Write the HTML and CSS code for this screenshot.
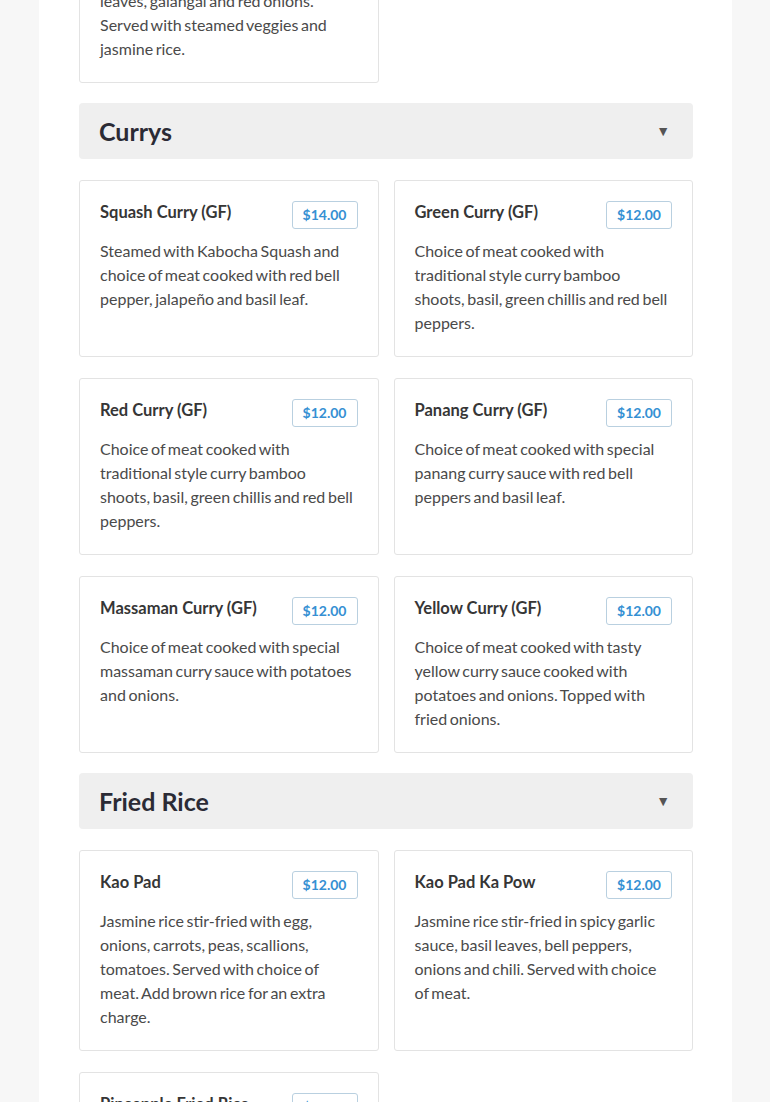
FILE: index.html
```html
<!DOCTYPE html>
<html lang="en">
<head>
<meta charset="utf-8">
<title>Menu</title>
<link rel="stylesheet" href="styles.css">
</head>
<body>
<main class="page">
  <section class="group group-prev">
    <div class="grid">
      <article class="card">
        <div class="card-head"><h3 class="dish">Pad Prik Khing</h3><span class="price">$12.00</span></div>
        <p class="desc">Choice of meat stir-fried with chili paste, lemongrass and kaffir lime<br>leaves, galangal and red onions. Served with steamed veggies and jasmine rice.</p>
      </article>
    </div>
  </section>

  <section class="group">
    <div class="section-head"><h2 class="section-title">Currys</h2><span class="caret">▼</span></div>
    <div class="grid">
      <article class="card">
        <div class="card-head"><h3 class="dish">Squash Curry (GF)</h3><span class="price">$14.00</span></div>
        <p class="desc">Steamed with Kabocha Squash and choice of meat cooked with red bell pepper, jalapeño and basil leaf.</p>
      </article>
      <article class="card">
        <div class="card-head"><h3 class="dish">Green Curry (GF)</h3><span class="price">$12.00</span></div>
        <p class="desc">Choice of meat cooked with traditional style curry bamboo shoots, basil, green chillis and red bell peppers.</p>
      </article>
      <article class="card">
        <div class="card-head"><h3 class="dish">Red Curry (GF)</h3><span class="price">$12.00</span></div>
        <p class="desc">Choice of meat cooked with traditional style curry bamboo shoots, basil, green chillis and red bell peppers.</p>
      </article>
      <article class="card">
        <div class="card-head"><h3 class="dish">Panang Curry (GF)</h3><span class="price">$12.00</span></div>
        <p class="desc">Choice of meat cooked with special panang curry sauce with red bell peppers and basil leaf.</p>
      </article>
      <article class="card">
        <div class="card-head"><h3 class="dish">Massaman Curry (GF)</h3><span class="price">$12.00</span></div>
        <p class="desc">Choice of meat cooked with special massaman curry sauce with potatoes and onions.</p>
      </article>
      <article class="card">
        <div class="card-head"><h3 class="dish">Yellow Curry (GF)</h3><span class="price">$12.00</span></div>
        <p class="desc">Choice of meat cooked with tasty yellow curry sauce cooked with potatoes and onions. Topped with fried onions.</p>
      </article>
    </div>
  </section>

  <section class="group">
    <div class="section-head"><h2 class="section-title">Fried Rice</h2><span class="caret">▼</span></div>
    <div class="grid">
      <article class="card">
        <div class="card-head"><h3 class="dish">Kao Pad</h3><span class="price">$12.00</span></div>
        <p class="desc">Jasmine rice stir-fried with egg, onions, carrots, peas, scallions, tomatoes. Served with choice of meat. Add brown rice for an extra charge.</p>
      </article>
      <article class="card">
        <div class="card-head"><h3 class="dish">Kao Pad Ka Pow</h3><span class="price">$12.00</span></div>
        <p class="desc">Jasmine rice stir-fried in spicy garlic sauce, basil leaves, bell peppers, onions and chili. Served with choice of meat.</p>
      </article>
      <article class="card">
        <div class="card-head"><h3 class="dish">Pineapple Fried Rice</h3><span class="price">$12.00</span></div>
        <p class="desc">Jasmine rice stir-fried with pineapple, cashew nuts, egg, onions, raisins and scallions. Served with choice of meat.</p>
      </article>
    </div>
  </section>
</main>
</body>
</html>
```

FILE: styles.css
```css
html, body {
  margin: 0;
  padding: 0;
}

body {
  background: #f7f7f7;
  font-family: Lato, "Open Sans", "Liberation Sans", sans-serif;
  color: #4a4a4a;
  height: 1102px;
  overflow: hidden;
}

.page {
  box-sizing: border-box;
  width: 693px;
  margin: -118px 0 0 39px;
  padding: 0 39px 40px 40px;
  background: #ffffff;
  min-height: 1300px;
}

.group + .group {
  margin-top: 20px;
}

.section-head {
  display: flex;
  align-items: center;
  justify-content: space-between;
  height: 56px;
  box-sizing: border-box;
  padding: 0 23px 0 20px;
  background: #efefef;
  border-radius: 4px;
  margin-bottom: 21px;
}

.section-title {
  margin: 0;
  font-size: 25px;
  font-weight: 700;
  color: #2b2b35;
  line-height: 1;
}

.caret {
  font-size: 14px;
  color: #555555;
  line-height: 1;
}

.grid {
  display: grid;
  grid-template-columns: 1fr 1fr;
  column-gap: 15px;
  row-gap: 21px;
}

.card {
  border: 1px solid #e3e3e3;
  border-radius: 3px;
  padding: 20px 20px 21px;
  background: #fff;
}

.card-head {
  display: flex;
  align-items: flex-start;
  justify-content: space-between;
  gap: 10px;
}

.dish {
  margin: 0;
  font-size: 16.5px;
  font-weight: 700;
  color: #363636;
  line-height: 22px;
}

.price {
  flex: none;
  box-sizing: border-box;
  height: 28px;
  padding: 0 10px;
  border: 1px solid #b9d0e0;
  border-radius: 3px;
  font-size: 14px;
  font-weight: 700;
  line-height: 26px;
  color: #3590d3;
}

.desc {
  margin: 10px 0 0;
  font-size: 16px;
  line-height: 24px;
  word-spacing: -1.5px;
  color: #4a4a4a;
}
```
